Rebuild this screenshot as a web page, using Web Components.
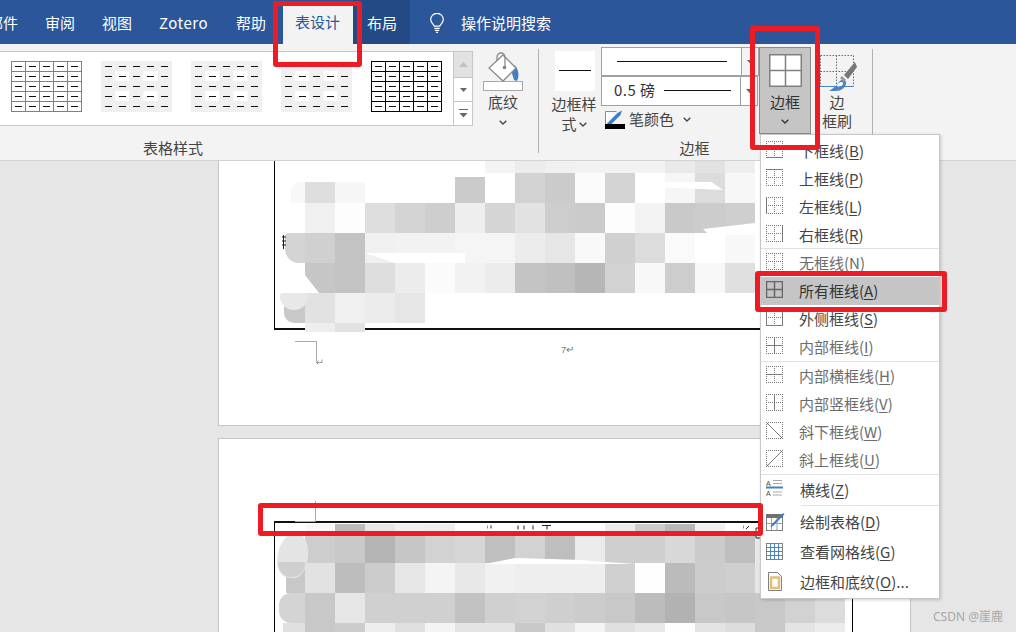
<!DOCTYPE html>
<html lang="zh"><head><meta charset="utf-8"><title>Word</title>
<style>
html,body{margin:0;padding:0;height:100%;overflow:hidden;background:#e6e6e6}
body{font-family:"Noto Sans CJK SC","Noto Sans",sans-serif;font-size:15px;color:#444}
u{text-underline-offset:2px}
</style></head><body>
<word-app>
  <word-titlebar slot="top">
    <word-tab style="margin-left:-25.5px">邮件</word-tab>
    <word-tab>审阅</word-tab>
    <word-tab>视图</word-tab>
    <word-tab style="letter-spacing:.5px;width:77px">Zotero</word-tab>
    <word-tab>帮助</word-tab>
    <word-tab active>表设计</word-tab>
    <word-tab context>布局</word-tab>
    <word-search>操作说明搜索</word-search>
  </word-titlebar>
  <word-ribbon slot="top"></word-ribbon>
  <word-document></word-document>
  <border-menu slot="over"></border-menu>
  <annot-box slot="over" box="273,1,89,66"></annot-box>
  <annot-box slot="over" box="750,26,70,124"></annot-box>
  <annot-box slot="over" box="755,271,192,41"></annot-box>
  <annot-box slot="over" box="258,503,505,33"></annot-box>
  <water-mark slot="over">CSDN @崖鹿</water-mark>
</word-app>
<script>
const FONT='"Noto Sans CJK SC","Noto Sans",sans-serif';
function def(name,css,html,init){
  customElements.define(name,class extends HTMLElement{
    constructor(){super();const r=this.attachShadow({mode:'open'});
      r.innerHTML='<style>'+css+'</style>'+(typeof html==='function'?html(this):html);}
    connectedCallback(){
      if(typeof html==='function'){this.shadowRoot.innerHTML='<style>'+css+'</style>'+html(this);}
      if(init)init.call(this,this.shadowRoot);
    }
  });
}
const chev=(c='#444')=>`<svg width="8" height="5" viewBox="0 0 8 5" style="display:block"><path d="M.7.7 4 4 7.3.7" fill="none" stroke="${c}" stroke-width="1.3"/></svg>`;
const tri=`<svg width="7" height="4" viewBox="0 0 7 4" style="display:block"><path d="M0 0h7L3.5 4z" fill="#666"/></svg>`;

def('word-app',`:host{display:block;position:relative;width:1016px;height:632px;overflow:hidden;background:#e6e6e6}`,
 `<slot name="top"></slot><slot></slot><slot name="over"></slot>`);

def('word-titlebar',`:host{display:flex;height:44px;background:#2b579a;color:#fff;overflow:hidden;font-size:15px}`,`<slot></slot>`);

def('word-tab',`:host{display:flex;align-items:center;padding:0 13.5px;height:44px;box-sizing:border-box;white-space:nowrap;flex:none}
:host([active]){background:#f3f3f3;color:#2b579a;margin-top:1px;height:43px;padding:0 13px 2px 12px;margin-left:3.5px}
:host([context]){background:#234a84;padding:0 13px 0 14px;width:57px}`,`<slot></slot>`);

def('word-search',`:host{display:flex;align-items:center;margin-left:20px;gap:17px;white-space:nowrap;padding-top:1px}`,
 `<svg width="14" height="20" viewBox="0 0 14 20" fill="none" stroke="#fff" stroke-width="1.2"><path d="M4.2 13.2C3.8 11 .7 10 .7 6.6a6.3 6.3 0 0 1 12.6 0c0 3.4-3.1 4.4-3.5 6.6z"/><path d="M4.3 15.3h5.4M4.8 17.3h4.4M6 19.3h2"/></svg><slot></slot>`);

def('table-thumb',`:host{display:block;width:71px;height:51px}svg{display:block}`,
 el=>{
  const v=el.getAttribute('v');let s='';
  const w=14.1,h=10;
  if(v==='band'){s+=`<rect x="0" y="0" width="71" height="51" fill="#f0f0f0"/>`;
    for(const[c,r]of[[1,1],[3,1],[1,3],[3,3]])s+=`<rect x="${c*w}" y="${r*h}" width="${w}" height="${h}" fill="#fff"/>`;}
  else{const col=v==='black'?'#000':'#808080';
    s+=`<rect x=".5" y=".5" width="70" height="50" fill="#fff" stroke="${col}"/>`;
    for(let i=1;i<5;i++){s+=`<path d="M${Math.round(i*w)+.5} 0v51" stroke="${col}"/><path d="M0 ${i*h+.5}h71" stroke="${col}"/>`;}}
  for(let c=0;c<5;c++)for(let r=0;r<5;r++){const x=Math.round(c*w)+4;s+=`<rect x="${x}" y="${r*h+5}" width="7" height="1" fill="#111"/>`;}
  return `<svg width="71" height="51" viewBox="0 0 71 51">${s}</svg>`;
 });

def('ribbon-group',`:host{display:flex;flex-direction:column;height:116px;box-sizing:border-box}
.c{flex:1;display:flex;min-height:0}.l{height:20px;line-height:20px;margin-bottom:2px;text-align:center;font-size:15px;color:#444}`,
 el=>`<div class="c"><slot></slot></div><div class="l" style="padding-right:${el.getAttribute('lp')||0}px">${el.getAttribute('label')}</div>`);

def('word-ribbon',`:host{display:flex;height:117px;box-sizing:border-box;background:#f3f3f3;border-bottom:1px solid #d2d2d2;font-size:15px;color:#444;overflow:hidden}
.div{width:1px;background:#b1b1b1;margin:5px 0 7px;flex:none}
.g1{margin-left:-192px;width:730px;flex:none}.g2{width:333px;flex:none}
.gallery{margin-top:7px;width:665px;height:75px;box-sizing:border-box;background:#fff;border:1px solid #c6c6c6;display:flex;position:relative}
.thumbs{display:flex;gap:19px;padding:9px 0 0 202px;flex:1}
.sc{width:18px;display:flex;flex-direction:column;border-left:1px solid #c6c6c6;flex:none}
.sc div{display:flex;align-items:center;justify-content:center;border-bottom:1px solid #c6c6c6;box-sizing:border-box;background:#fff}
.sc div:last-child{border:0}
.btn{display:flex;flex-direction:column;align-items:center;line-height:20px;flex:none;text-align:center}
.shade{width:50px;margin-left:5px;padding-top:8px}
.sq{width:40px;height:40px;background:#fff;margin-top:7px;margin-bottom:3px;display:flex;align-items:center;justify-content:center}
.sq i{display:block;width:32px;height:1px;background:#111;margin-top:-1px}
.styles{width:48px;margin-left:12px}
.styles span{margin-right:2px}
.row{display:flex;align-items:center;gap:2px;justify-content:center}
.col{width:158px;margin-left:2px;padding-top:3px;flex:none}
.combo{box-sizing:border-box;background:#fff;border:1px solid #a0a0a0;display:flex;align-items:center;color:#333}
.combo .main{flex:1;display:flex;align-items:center}
.combo .a{width:16px;border-left:1px solid #a0a0a0;align-self:stretch;display:flex;align-items:center;justify-content:center;background:#f3f3f3}
.pen{display:flex;align-items:center;margin-left:4px;height:28px;gap:4px}
.pen span{padding-bottom:3px}
.bb{margin-top:3px;width:52px;height:87px;box-sizing:border-box;background:#c5c5c5;border:1px solid #8a8a8a;padding-top:6px;color:#333}
.bb .t{margin-top:5px}.bb svg.ch{margin-top:7px}
.brush{width:52px;padding:10px 9px 0 0;color:#444}
.brush .t{margin-top:0;line-height:19px}`,
`<ribbon-group class="g1" label="表格样式">
   <div class="gallery"><div class="thumbs"><table-thumb v="grey"></table-thumb><table-thumb v="band"></table-thumb><table-thumb v="band"></table-thumb><table-thumb v="band"></table-thumb><table-thumb v="black"></table-thumb></div>
     <div class="sc"><div style="height:26px;background:#e2e2e2"><svg width="9" height="5"><path d="M0 5 4.5 0 9 5z" fill="#c0c0c0"/></svg></div><div style="height:24px">${tri}</div><div style="flex:1;flex-direction:column;gap:2px"><svg width="9" height="9"><path d="M0 .5h9" stroke="#666"/><path d="M.5 4h8L4.5 8.500z" fill="#666"/></svg></div></div></div>
   <div class="btn shade">
     <svg width="42" height="40" viewBox="0 0 42 40"><rect x="1.500" y="29.500" width="39" height="9" fill="#fff" stroke="#a8a8a8"/>
       <path d="M32 13c4 3 6 10 3 16l-3-1-3-10z" fill="#3f7fbf"/>
       <path d="M21 3 34 16 21 29 7 16z" fill="#fff" stroke="#8c8c8c" stroke-width="1.300"/>
       <path d="M15 9V5a4 4 0 0 1 8 0V15" fill="none" stroke="#8c8c8c" stroke-width="1.300"/><circle cx="22.500" cy="15.500" r="1.800" fill="#808080"/></svg>
     <span>底纹</span><span style="margin-top:8px">${chev()}</span></div>
 </ribbon-group><i class="div"></i>
 <ribbon-group class="g2" label="边框" lp="22">
   <div class="btn styles"><div class="sq"><i></i></div><span>边框样</span><span class="row">式 ${chev()}</span></div>
   <div class="col">
     <div class="combo" style="height:29px;width:158px;margin-bottom:0"><div class="main" style="padding-left:15px"><i style="display:block;width:110px;height:1px;background:#111;margin-top:-1px"></i></div><div class="a">${tri}</div></div>
     <div class="combo" style="height:30px;width:157px"><div class="main" style="padding-left:12px;gap:9px"><span style="white-space:nowrap;padding-bottom:3px;letter-spacing:.45px">0.5 磅</span><i style="display:block;width:67px;height:1px;background:#111;margin-top:-1px"></i></div><div class="a" style="background:#fff">${tri}</div></div>
     <div class="pen"><svg width="20" height="20" viewBox="0 0 20 20"><path d="M.5 15V1.500h11" fill="#fff" stroke="#8c8c8c"/><path d="M2 13.500 12.500 3 17 .5 15.500 5 5 15.500H2z" fill="#3f7fbf"/><rect y="14" width="20" height="5" fill="#000"/></svg><span>笔颜色</span><span style="margin-left:5px;padding-bottom:2px">${chev()}</span></div>
   </div>
   <div class="btn bb"><svg width="33" height="33" viewBox="0 0 33 33"><rect x=".75" y=".75" width="31.500" height="31.500" fill="#fff" stroke="#808080" stroke-width="1.500"/><path d="M16.500 1v31M1 16.500h31" stroke="#808080" stroke-width="1.500"/></svg><span class="t">边框</span><svg class="ch" width="8" height="5" viewBox="0 0 8 5"><path d="M.7.7 4 4 7.300.7" fill="none" stroke="#333" stroke-width="1.300"/></svg></div>
   <div class="btn brush"><svg width="40" height="38" viewBox="0 0 40 38"><g fill="none" stroke="#666" stroke-dasharray="1.500 1.500"><path d="M3.500 1.500h33M3.500 1.500v31M36.500 1.500v31M3.500 17.500h33M19.500 1.500v31"/></g><path d="M3 32.500h33" stroke="#4a86c5" stroke-width="1.200"/><path d="M12 37C17 34 20 31 22 28 25 24 30 26 29 30 28 34 24 37 19 37Z" fill="#4a86c5"/><path d="M19.500 32c1-2 3-4 5-4 1 0 2 1 1 3-1 1-4 2-6 1z" fill="#fff"/><path d="M25 22 29 26 27 28 23 24z" fill="#999"/><path d="M38 8 40 13 31 25 27 21z" fill="#777"/></svg><span class="t">边<br>框刷</span></div>
 </ribbon-group><i class="div"></i>`);

def('mosaic-patch',`:host{display:grid;grid-template-columns:repeat(var(--n),30px);position:absolute}
div.cell{min-width:0}::slotted(*){position:absolute}`,
 el=>{
  const rows=JSON.parse(el.getAttribute('rows'));
  const cols=Math.max(...rows.map(r=>r[1].split(' ').length));
  el.style.setProperty('--n',cols);
  el.style.gridTemplateRows=rows.map(r=>r[0]+'px').join(' ');
  let h='';
  for(const[,cells]of rows){const a=cells.split(' ');
    for(let i=0;i<cols;i++){const[c,o]=(a[i]||'--').split('/');
      h+=`<div class="cell" style="${c!=='--'?`background:#${c}${c}${c};`:''}${o?`margin-top:${o}px;`:''}"></div>`;}}
  return h+'<slot></slot>';
 });

def('blob-shape',`:host{display:block;position:absolute}`,'');

def('doc-page',`:host{display:block;position:relative;width:693px;box-sizing:border-box;background:#fff;border:1px solid #c6c6c6;flex:none}`,`<slot></slot>`);

def('table-frame',`:host{display:block;box-sizing:border-box;width:579px;border:0 solid #000}`,`<slot></slot>`);

def('crop-mark',`:host{display:block;position:absolute}svg{display:block}`,
 el=>el.getAttribute('v')==='a'
 ?`<svg width="30" height="28"><path d="M0 .5h21.500v20" fill="none" stroke="#a8a8a8"/><path d="M27 18.500v3h-5.500M23.500 19.500l-2 2 2 2" fill="none" stroke="#999"/></svg>`
 :`<svg width="22" height="22"><path d="M21.500 0v20.500H1" fill="none" stroke="#a8a8a8"/></svg>`);

def('page-num',`:host{display:block;position:absolute;font:9.5px "Liberation Sans",sans-serif;color:#777;line-height:10px}`,`<slot></slot>`);

def('stray-marks',`:host{display:block;position:absolute}svg{display:block}`,
 el=>`<svg width="${el.getAttribute('w')}" height="${el.getAttribute('h')}" fill="none" stroke="#222"><path d="${el.getAttribute('d')}"/></svg>`);

def('word-document',`:host{display:flex;flex-direction:column;gap:12px;height:471px;padding-left:218px;overflow:hidden;background:#e6e6e6;box-sizing:border-box}
.p1{height:265px;border-top:0}
.f1{height:169px;margin-left:55px;border-left:1px solid #000;border-bottom:2px solid #111}
.p2{height:300px}
.f2{margin:82px 0 0 55px;height:300px;border-left:1.500px solid #000;border-top:2px solid #111;border-right:1px solid #000}
.m1{left:56px;top:0}.m2{left:56px;top:85px}`,
`<doc-page class="p1"><table-frame class="f1"></table-frame>
  <mosaic-patch class="m1" rows='[[12,"-- -- -- -- -- -- -- f4 ec f0 f2 f2 f2 ea e2 ee"],
   [30,"-- de/9 f6/9 -- -- -- cb/4 -- d2 cb fb d4 -- f6 dc f7"],
   [30,"-- f0 fd de d4 ce ee d5 e2 cd cb fd f3 c9 cc cf"],
   [30,"-- d0 c3 f0 f2 f2 f5 f5 ec e6 f9 d0 dc fa -- f8"],
   [30,"-- c6 c3 de ec fb f2 ec c4 c0 b6 d2 f8 cd f8 e0"],
   [30,"-- e2 f0 ec e6"],
   [9,"-- ee e2"]]'>
    <blob-shape style="left:16px;top:21px;width:14px;height:21px;background:#f8f8f8;border-radius:9px 0 0 0"></blob-shape>
    <blob-shape style="left:10px;top:72px;width:20px;height:30px;background:#d4d4d4;border-radius:4px 0 0 14px"></blob-shape>
    <blob-shape style="left:30px;top:102px;width:14px;height:30px;background:#fff;clip-path:polygon(0 40%,0 100%,100% 100%);"></blob-shape>
    <blob-shape style="left:9px;top:144px;width:21px;height:18px;background:#c8c8c8;border-radius:0 0 0 10px"></blob-shape>
    <blob-shape style="left:5px;top:132px;width:28px;height:17px;background:#e8e8e8;border-radius:3px 3px 14px 14px"></blob-shape>
    <blob-shape style="left:90px;top:92px;width:100px;height:10px;background:#fff;clip-path:polygon(0 0,100% 0,100% 100%,30% 100%)"></blob-shape>
    <blob-shape style="left:390px;top:21px;width:58px;height:8px;background:#fff;clip-path:polygon(0 0,80% 0,100% 100%,0 70%)"></blob-shape>
    <blob-shape style="left:428px;top:62px;width:52px;height:12px;background:#fff;clip-path:polygon(100% 0,100% 100%,12% 100%,0 50%)"></blob-shape>
  </mosaic-patch>
  <crop-mark v="a" style="left:76px;top:180px"></crop-mark>
  <page-num style="left:342px;top:184px">7↵</page-num>
  <stray-marks style="left:63px;top:74px" w="5" h="14" d="M1.500 0v14M0 2h4M0 6h4M0 10h4"></stray-marks>
</doc-page>
<doc-page class="p2"><crop-mark v="b" style="left:75px;top:62px"></crop-mark>
  <table-frame class="f2"></table-frame>
  <mosaic-patch class="m2" rows='[[9,"-- f8 bc e6 f0 ee -- -- -- -- -- ec cc b8 f0 -- -- -- --"],
   [30,"-- cd c8 b4 c6 d2 d6 c0 d2 be eb cf cf d8 cb be e8 -- --"],
   [30,"-- e2 bd cc e6 f4 e8 f1 ee ee ee d0 fe bb cc cf e6 -- --"],
   [30,"-- c8 e6 d0 d0 d0 c2 d0 d2 cf cc c8 bc b2 c8 c6 c8 d2 dc"],
   [9,"-- c8 cc ee e0 f4 e4 e4 c9 e0 f4 e0 e8 fe e4 dd c8 e4 ec"]]'>
    <blob-shape style="left:11px;top:39px;width:19px;height:30px;background:#c8c8c8"></blob-shape>
    <blob-shape style="left:3px;top:9px;width:30px;height:45px;background:#e4e4e4;border-radius:60% 60% 50% 50%;transform:rotate(10deg)"></blob-shape>
    <blob-shape style="left:3px;top:38px;width:27px;height:15px;background:#cfcfcf;border-radius:0 0 14px 14px"></blob-shape>
    <blob-shape style="left:4px;top:69px;width:26px;height:30px;background:#d4d4d4;border-radius:12px 0 0 12px"></blob-shape>
    <blob-shape style="left:8px;top:99px;width:22px;height:9px;background:#e0e0e0"></blob-shape>
    <blob-shape style="left:210px;top:34px;width:150px;height:6px;background:#fff;clip-path:polygon(0 100%,20% 0,60% 30%,100% 100%)"></blob-shape>
  </mosaic-patch>
  <stray-marks style="left:268px;top:86px" w="70" h="6" d="M0 .5v3M4 .5v3M31 .5v4M37 .5v4M46 .5v4M55 .5h9M60 .5v4"></stray-marks>
  <stray-marks style="left:524px;top:86px" w="18" h="18" d="M0 .5v3M3 4l3-3M13 3h4v5h-4zM13 9v4h4"></stray-marks>
</doc-page>`);

function gridIcon(k,on){
  const seg={t:'M0 .5h17',b:'M0 16.500h17',l:'M.5 0v17',r:'M16.500 0v17',h:'M0 8.500h17',v:'M8.500 0v17',d:'M1 1l15 15',u:'M1 16 16 1'};
  const sol=k==='0'?'':k;
  const diag=/[du]/.test(sol);
  let s='';
  for(const c of diag?'tblr':'tblrhv'){if(!sol.includes(c))s+=`<path d="${seg[c]}" stroke="#777" stroke-dasharray="1 1"/>`;}
  for(const c of sol){s+=`<path d="${seg[c]}" stroke="${on?'#666':'#7a7a7a'}" stroke-width="${on?1.5:1}"/>`;}
  return `<svg width="17" height="17" viewBox="0 0 17 17" fill="none">${s}</svg>`;
}
const ICONS={
 hline:`<svg width="17" height="18" viewBox="0 0 17 18"><text x="0" y="6.500" font-size="7" font-family="Liberation Sans" fill="#444">A</text><path d="M7 1.500h9M7 4.500h9M7 13h9M7 16h9" stroke="#a8a8a8"/><rect y="7.500" width="17" height="2" fill="#4a7fb8"/><text x="0" y="17" font-size="7" font-family="Liberation Sans" fill="#444">A</text></svg>`,
 draw:`<svg width="19" height="19" viewBox="0 0 19 19"><rect x=".5" y="2.500" width="16" height="16" fill="#fff" stroke="#808080"/><rect x="0" y="2" width="17" height="4" fill="#707070"/><path d="M.5 11.500h16M5.500 6v12M11 6v12" stroke="#a0a0a0"/><path d="M5 13 15 3l2-2 1.500 1.500L7 14l-2.500 1z" fill="#3f7fbf"/></svg>`,
 grid:`<svg width="17" height="17" viewBox="0 0 17 17"><rect x=".5" y=".5" width="16" height="16" fill="#fff" stroke="#808080"/><path d="M1 4.500h15M1 8.500h15M1 12.500h15M4.500 1v15M8.500 1v15M12.500 1v15" stroke="#4a86c5"/></svg>`,
 page:`<svg width="17" height="19" viewBox="0 0 17 19"><path d="M2.500.5h9l4 4v14h-13z" fill="#fff" stroke="#808080"/><path d="M5 5.500h8v10.500H5z" fill="#fff" stroke="#e2bd7c" stroke-width="2.500"/></svg>`
};

def('menu-item',`:host{display:flex;align-items:center;height:28px;padding:0 0 2px 5px;box-sizing:border-box;font-size:15px;color:#444;white-space:nowrap;flex:none}
:host([tall]){padding-bottom:4px}
:host([dim]){color:#6c6c6c}:host([on]){background:#c5c5c5;color:#333}
.i{width:19px;height:19px;display:flex;align-items:center;margin:0 14px 2px 0;flex:none}
:host([tall]) .i{margin-bottom:0}
u{text-underline-offset:2px;text-decoration-thickness:1px}`,
 el=>{const k=el.getAttribute('icon');
  const ic=ICONS[k]||gridIcon(k,el.hasAttribute('on'));
  return `<span class="i">${ic}</span><slot></slot>`;});

def('border-menu',`:host{display:flex;flex-direction:column;position:absolute;left:760px;top:134px;width:180px;height:465px;box-sizing:border-box;background:#fff;border:1px solid #c8c8c8;padding-top:2px;box-shadow:1px 1px 3px rgba(0,0,0,.18);font-family:${FONT}}
.s{height:1px;background:#e1e1e1;flex:none}.s.o{margin-top:-1px}
u{text-underline-offset:2px;text-decoration-thickness:1px}
.x{padding-left:1px}`,
`<menu-item icon="b">下框线(<u>B</u>)</menu-item>
<menu-item icon="t">上框线(<u>P</u>)</menu-item>
<menu-item icon="l">左框线(<u>L</u>)</menu-item>
<menu-item icon="r">右框线(<u>R</u>)</menu-item><div class="s o"></div>
<menu-item icon="0" dim>无框线(<u>N</u>)</menu-item>
<menu-item icon="tblrhv" on>所有框线(<u>A</u>)</menu-item>
<menu-item icon="tblr">外侧框线(<u>S</u>)</menu-item>
<menu-item icon="hv" dim>内部框线(<u>I</u>)</menu-item><div class="s"></div>
<menu-item icon="h" dim>内部横框线(<u>H</u>)</menu-item>
<menu-item icon="v" dim>内部竖框线(<u>V</u>)</menu-item>
<menu-item icon="d" dim>斜下框线(<u>W</u>)</menu-item>
<menu-item icon="u" dim>斜上框线(<u>U</u>)</menu-item><div class="s"></div>
<menu-item icon="hline" style="height:30px;padding-bottom:2px"><span class="x">横线(<u>Z</u>)</span></menu-item><div class="s" style="margin-left:40px"></div>
<menu-item tall icon="draw" style="margin-top:2px;height:30px"><span class="x">绘制表格(<u>D</u>)</span></menu-item>
<menu-item tall icon="grid" style="height:30px"><span class="x">查看网格线(<u>G</u>)</span></menu-item>
<menu-item tall icon="page" style="height:30px"><span class="x">边框和底纹(<u>O</u>)...</span></menu-item>`);

def('annot-box',`:host{display:block;position:absolute;box-sizing:border-box;border:5px solid #ed1c24;border-radius:3px;pointer-events:none}`,'',
 function(){const[a,b,c,d]=this.getAttribute('box').split(',');Object.assign(this.style,{left:a+'px',top:b+'px',width:c+'px',height:d+'px'});});

def('water-mark',`:host{display:block;position:absolute;left:933px;top:609px;font:12px/16px "Noto Sans","Noto Sans CJK SC",sans-serif;color:#a6a6a6;white-space:nowrap}`,`<slot></slot>`);
</script>
</body></html>
